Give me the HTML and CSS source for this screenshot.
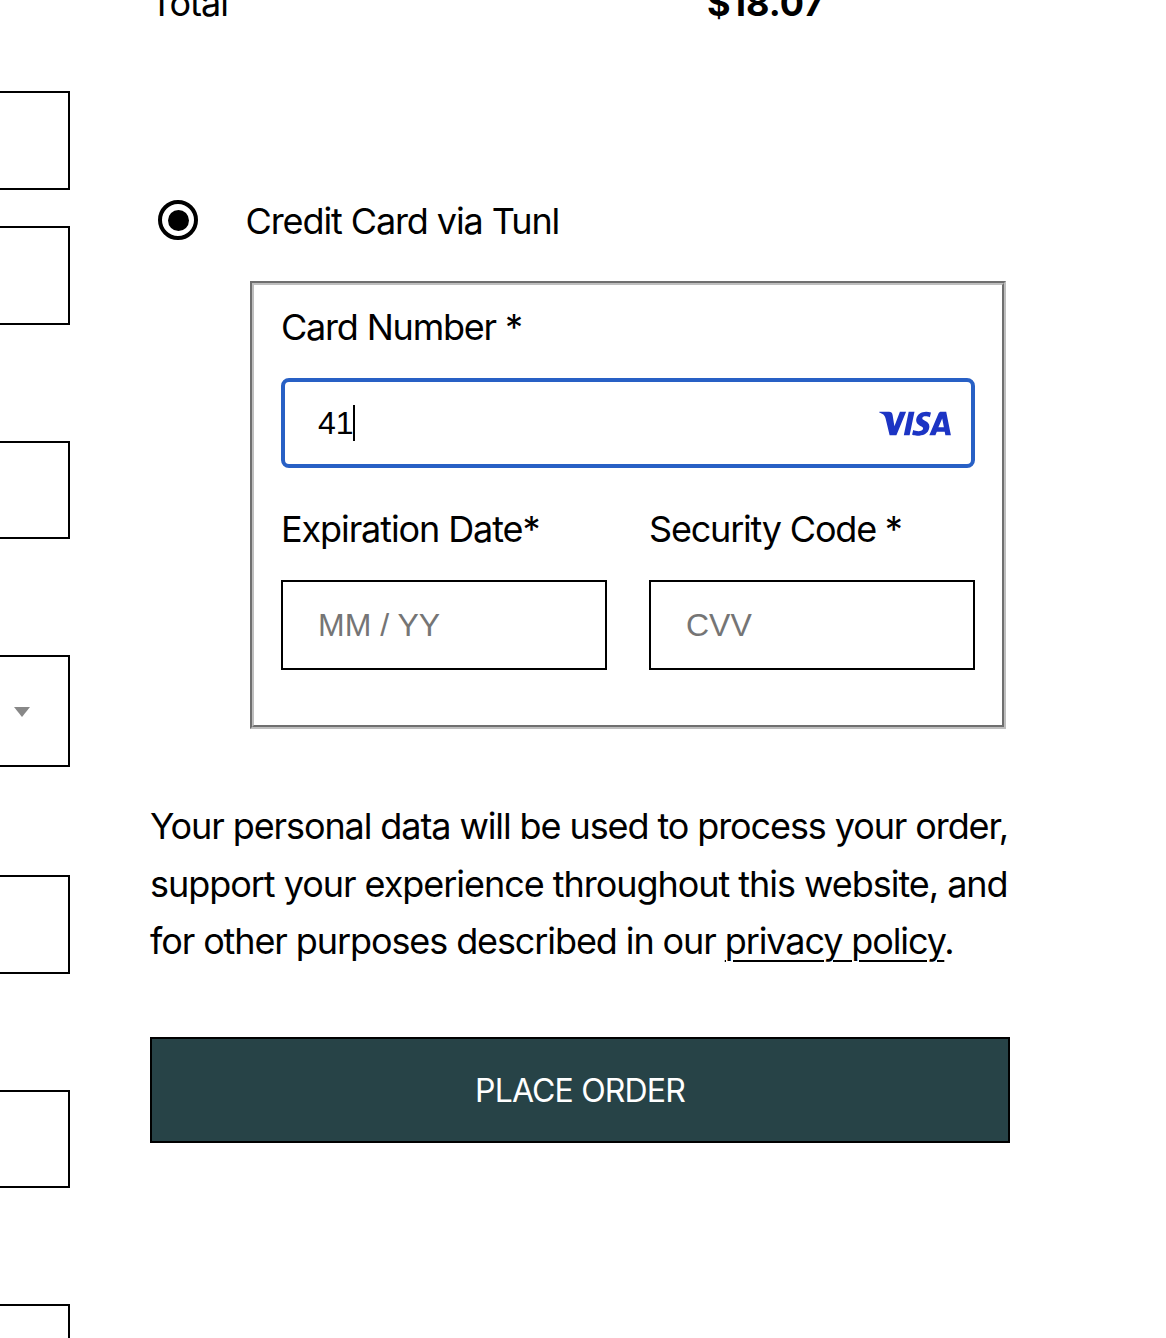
FILE: index.html
```html
<!DOCTYPE html>
<html lang="en">
<head>
<meta charset="utf-8">
<title>Checkout</title>
<link rel="stylesheet" href="styles.css">
</head>
<body>
<main class="checkout">
  <div class="billing">
    <div class="billing-field"></div>
    <div class="billing-field billing-field-second"></div>
    <div class="billing-field"></div>
    <div class="billing-field billing-select"><svg class="arrow" viewBox="0 0 16 10"><path d="M0 0H16L8 10Z"/></svg></div>
    <div class="billing-field"></div>
    <div class="billing-field"></div>
    <div class="billing-field"></div>
  </div>
  <section class="order">
    <div class="total"><span class="total-label">Total</span><strong class="total-amount">$18.07</strong></div>
    <div class="method"><span class="radio"></span><span class="method-name">Credit Card via Tunl</span></div>
    <div class="card-form">
      <div class="card-form-inner">
        <div class="label label-spaced">Card Number *</div>
        <div class="input input-focus">
          <span class="value">41</span><span class="caret"></span>
          <svg class="visa" viewBox="0 0 72 26"><path d="M0 1.3C.2.9.6.8 1.2.8H10C12.2.8 13.2 2 13.6 4L15.4 15.2L20.9.8H27.1L17.4 24.3H10.6L6.6 7.6C6 5.2 5.2 3.8 3 2.8Z"/><path d="M29.7.8H35.5L30.6 24.3H24.8Z"/><path d="M52 1.6L50.8 6.3C48.4 5.2 43.6 4.6 43.3 7.2C43.1 10.1 51.2 9.8 50.3 16.5C49.4 23.5 42.6 24.8 38.2 24.7C36 24.7 34.3 24.3 33.1 23.8L34.2 19C37.4 20.6 43.7 20.8 44.1 17.6C44.4 14.6 36.5 14.8 37.2 8.4C38 1.6 45.9-.9 52 1.6Z"/><path fill-rule="evenodd" d="M62.2.8H67.2L71.9 24.3H66.4L65.7 20.7H57.8L56.4 24.3H50.3L59.5 2.6C60 1.4 60.9.8 62.2.8ZM63.2 7.6L59.4 16.3H64.9Z"/></svg>
        </div>
        <div class="pair">
          <div class="pair-item"><div class="label">Expiration Date*</div><div class="input"><span class="placeholder">MM / YY</span></div></div>
          <div class="pair-item"><div class="label label-spaced">Security Code *</div><div class="input"><span class="placeholder">CVV</span></div></div>
        </div>
      </div>
    </div>
    <p class="privacy">Your personal data will be used to process your order,<br><span class="line-two">support your experience throughout this website, and</span><br>for other purposes described in our <a class="link" href="#">privacy policy</a>.</p>
    <button class="submit" type="button">PLACE ORDER</button>
  </section>
</main>
</body>
</html>
```
FILE: styles.css
```css
* { box-sizing: border-box; }
body {
  margin: 0;
  height: 1338px;
  overflow: hidden;
  background: #fff;
  color: #000;
  font: 36px/57.6px Inter, sans-serif;
  letter-spacing: -1.1px;
}
.checkout { display: flex; gap: 80px; height: 1338px; overflow: hidden; }
.billing { flex: none; width: 70px; padding-top: 91px; }
.billing-field {
  height: 98px;
  margin-bottom: 117px;
  border: 2px solid #000;
  border-left: 0;
}
.billing-field:nth-child(1) { height: 99px; margin-bottom: 36px; }
.billing-field-second { height: 99px; margin-bottom: 116px; }
.billing-field:nth-child(3) { margin-bottom: 116px; }
.billing-select { display: flex; align-items: center; height: 112px; margin-bottom: 108px; padding-left: 14px; }
.billing-field:nth-child(5) { height: 99px; margin-bottom: 116px; }
.billing-field:nth-child(6) { margin-bottom: 116px; }
.arrow { width: 16px; height: 10px; margin-top: 2px; fill: #888; }
.order { display: flex; flex-direction: column; width: 860px; margin-top: -25px; white-space: nowrap; }
.total { display: flex; height: 58px; }
.total-label { width: 557px; letter-spacing: -1px; }
.total-amount { font-weight: 700; letter-spacing: 0; }
.method { display: flex; align-items: center; height: 58px; margin-top: 160px; padding-left: 8px; }
.radio {
  width: 40px;
  height: 40px;
  margin: -4px 47.5px 0 0;
  padding: 5.5px;
  border: 4px solid #000;
  border-radius: 50%;
  background: #000 content-box;
}
.card-form {
  width: 756px;
  height: 448px;
  margin: 30px 0 0 100px;
  border: 2px solid;
  border-color: #6f6f6f #bebebe #bebebe #6f6f6f;
}
.card-form-inner {
  height: 100%;
  padding: 14px 27px;
  border: 2px solid;
  border-color: #bebebe #6f6f6f #6f6f6f #bebebe;
}
.label { height: 58px; }
.label-spaced { letter-spacing: -1.2px; }
.input {
  display: flex;
  align-items: center;
  height: 90px;
  margin-top: 21px;
  padding: 0 35px;
  border: 2px solid #000;
  font: 32px/38px "Liberation Sans", Arial, sans-serif;
  letter-spacing: 0;
}
.input-focus { padding: 0 20px 0 33px; border: 4px solid #2860c5; border-radius: 8px; }
.caret { width: 2px; height: 36px; margin-left: -1px; background: #000; }
.visa { width: 72px; height: 26px; margin: 2px 0 0 auto; fill: #1c34c4; }
.pair { display: flex; gap: 42px; margin-top: 33px; }
.pair-item { width: 326px; }
.placeholder { color: #757575; }
.privacy { margin: 69px 0 0; }
.line-two { letter-spacing: -1.04px; }
.link { color: inherit; text-decoration: underline; text-decoration-thickness: 2px; text-underline-offset: 6px; }
.submit {
  height: 106px;
  margin-top: 66px;
  padding: 3px 0 0;
  border: 2px solid #000;
  background: #274347;
  color: #fff;
  font: 32px/58px Inter, sans-serif;
  letter-spacing: -.85px;
}
```
